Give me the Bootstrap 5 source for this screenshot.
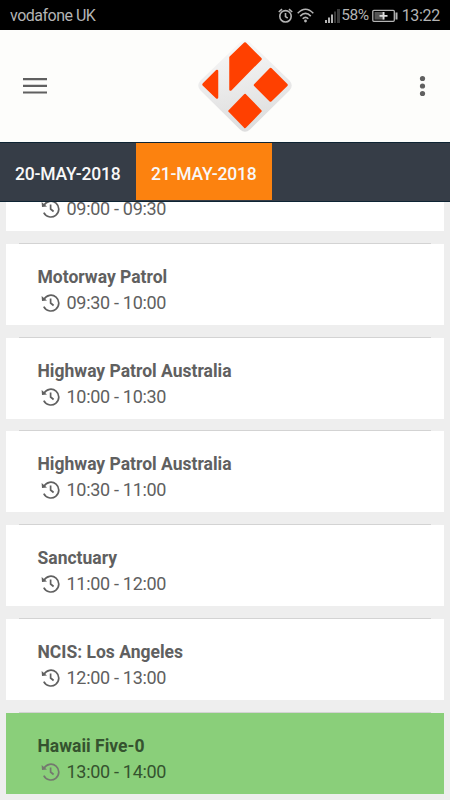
<!DOCTYPE html>
<html lang="en">
<head>
<meta charset="utf-8">
<meta name="viewport" content="width=device-width, initial-scale=1">
<title>TV Guide</title>
<link href="https://cdn.jsdelivr.net/npm/bootstrap@5.3.0/dist/css/bootstrap.min.css" rel="stylesheet">
<style>
  body { font-family: Roboto, "Liberation Sans", sans-serif; background: #eee; height: 800px; line-height: 1; }
  svg { display: block; flex: none; }
  .status { height: 30px; background: #000; color: #b4b4b4; padding: 1px 10px 0; font-size: 16px; letter-spacing: -.5px; }
  .status .batt { font-size: 15.5px; margin: 0 3px 0 1px; }
  .status .clock { letter-spacing: -.3px; }
  .signal { margin-left: 11px; }
  .appbar { height: 112px; background: #fdfdfb; padding: 0 22px 0 22px; }
  .logo { margin-left: 25px; }
  .tabs { height: 60px; background: #363d47; border-top: 1px solid #0e2433; border-bottom: 1px solid #0e2433; font-size: 17.5px; font-weight: 500; letter-spacing: -.18px; }
  .tabs .nav-link { width: 136px; height: 60px; color: #f8f8f8; padding: 3px 0 0 15px; }
  .tabs .nav-link.active { background: #fc820f; height: 57px; padding-top: 6px; }
  .guide { padding: 0 6px 6.2px; gap: 12.6px; }
  .show { height: 81.2px; flex: none; border: 0; border-radius: 0; background: #fff; padding: 0 13px; color: #606060; }
  .show::before { content: ""; height: 1px; margin-top: -1px; background: #d3d3d3; flex: none; }
  .show-body { padding: 24px 0 0 18.5px; }
  .show-title { font-size: 17.5px; font-weight: 700; line-height: 18px; margin: 0; }
  .show-time { font-size: 18px; letter-spacing: -.3px; line-height: 18px; margin-top: 8px; padding-left: 3px; gap: 7px; }
  .show-time svg { color: #606060; }
  .current { background: #8acf7a; color: #35532f; }
  .current .show-time svg { color: #74786f; }
</style>
</head>
<body class="d-flex flex-column overflow-hidden">
<svg width="0" height="0" class="position-absolute">
  <symbol id="history" viewBox="0 0 19 18">
    <path d="M3 5.200A7.900 7.900 0 1 1 2.800 12.600" fill="none" stroke="currentColor" stroke-width="1.700"/>
    <path d="M.6 2 1 6.900 6 6.400Z" fill="currentColor"/>
    <path d="M9.600 4.500V9L12.600 11.500" fill="none" stroke="currentColor" stroke-width="1.700"/>
  </symbol>
</svg>

<header class="status d-flex align-items-center flex-shrink-0">
  <span class="me-auto carrier">vodafone UK</span>
  <svg width="15" height="16" viewBox="0 0 15 16" fill="none" stroke="#b4b4b4" stroke-width="1.6"><circle cx="7.5" cy="8.3" r="5.7"/><path d="M7.5 5v3.700l2.200 1.500M.8 4 4 1.200M14.200 4 11 1.200"/></svg>
  <svg class="ms-1" width="17" height="15" viewBox="0 0 17 15" fill="none" stroke="#b4b4b4" stroke-width="1.6"><path d="M.7 5.3Q8.5-2.7 16.3 5.3M3.2 8.1Q8.5 2.7 13.8 8.1M5.7 10.8Q8.5 8 11.3 10.8"/><circle cx="8.500" cy="13" r="1.400" fill="#b4b4b4" stroke="none"/></svg>
  <svg class="signal" width="15" height="15" viewBox="0 0 15 15" fill="#b4b4b4"><path d="M0 12h2v3H0zM3 9.500h2V15H3zM6 6.500h2V15H6z"/><path d="M9 3.500h2V15H9zM12 1h3v14h-3z" fill="#3a3a3a"/></svg>
  <span class="batt">58%</span>
  <svg width="26" height="14" viewBox="0 0 26 14"><rect x=".8" y="1.300" width="21.500" height="11" rx="1" fill="none" stroke="#b4b4b4" stroke-width="1.300"/><path d="M2.500 3h10v7.600h-10z" fill="#555"/><path d="M23.500 3.500h2v7h-2z" fill="#b4b4b4"/><path d="M7.500 6.800h8M11.500 3v7.600" stroke="#ddd" stroke-width="1.800"/></svg>
  <span class="clock ms-1">13:22</span>
</header>

<nav class="appbar d-flex align-items-center justify-content-between flex-shrink-0">
  <svg width="26" height="18" viewBox="0 0 26 18" fill="#606060"><path d="M1 1h24v2.200H1zM1 7.800h24V10H1zM1 14.400h24v2.200H1z"/></svg>
  <svg class="logo" width="98" height="98" viewBox="0 0 98 98">
    <defs><linearGradient id="plate" x1="0" y1="0" x2=".2" y2="1"><stop offset="0" stop-color="#fafafa"/><stop offset="1" stop-color="#dedede"/></linearGradient></defs>
    <path d="M44 5.500Q49 .5 54 5.500L93.500 43.500Q98 48.500 93.500 53.500L54 92.500Q49 97 44 92.500L4.500 53.500Q0 48.500 4.500 43.500Z" fill="url(#plate)"/>
    <g fill="#ff4000" stroke="#ff4000" stroke-width="2.500" stroke-linejoin="round">
      <path d="M49 6.500 64.500 22 34.500 52.500V20.500Z"/>
      <path d="M21 34V60.500L7.500 47.500Z"/>
      <path d="M74.500 32 90.500 48 74.500 63.500 59 48Z"/>
      <path d="M49 58 64.500 74 49 90 33.500 74Z"/>
    </g>
  </svg>
  <svg width="11" height="22" viewBox="0 0 11 22" fill="#606060"><circle cx="5.500" cy="3.500" r="2.600"/><circle cx="5.500" cy="11" r="2.600"/><circle cx="5.500" cy="18.500" r="2.600"/></svg>
</nav>

<div class="tabs nav flex-nowrap flex-shrink-0">
  <a class="nav-link d-flex align-items-center" href="#">20-MAY-2018</a>
  <a class="nav-link active d-flex align-items-center" href="#">21-MAY-2018</a>
</div>

<main class="guide d-flex flex-column justify-content-end flex-grow-1 overflow-hidden">
  <article class="show card"><div class="show-body"><div class="show-title">&nbsp;</div><div class="show-time d-flex align-items-center"><svg width="19" height="18"><use href="#history"/></svg><span>09:00 - 09:30</span></div></div></article>
  <article class="show card"><div class="show-body"><h2 class="show-title">Motorway Patrol</h2><div class="show-time d-flex align-items-center"><svg width="19" height="18"><use href="#history"/></svg><span>09:30 - 10:00</span></div></div></article>
  <article class="show card"><div class="show-body"><h2 class="show-title">Highway Patrol Australia</h2><div class="show-time d-flex align-items-center"><svg width="19" height="18"><use href="#history"/></svg><span>10:00 - 10:30</span></div></div></article>
  <article class="show card"><div class="show-body"><h2 class="show-title">Highway Patrol Australia</h2><div class="show-time d-flex align-items-center"><svg width="19" height="18"><use href="#history"/></svg><span>10:30 - 11:00</span></div></div></article>
  <article class="show card"><div class="show-body"><h2 class="show-title">Sanctuary</h2><div class="show-time d-flex align-items-center"><svg width="19" height="18"><use href="#history"/></svg><span>11:00 - 12:00</span></div></div></article>
  <article class="show card"><div class="show-body"><h2 class="show-title">NCIS: Los Angeles</h2><div class="show-time d-flex align-items-center"><svg width="19" height="18"><use href="#history"/></svg><span>12:00 - 13:00</span></div></div></article>
  <article class="show card current"><div class="show-body"><h2 class="show-title">Hawaii Five-0</h2><div class="show-time d-flex align-items-center"><svg width="19" height="18"><use href="#history"/></svg><span>13:00 - 14:00</span></div></div></article>
</main>
<script src="https://cdn.jsdelivr.net/npm/bootstrap@5.3.0/dist/js/bootstrap.bundle.min.js"></script>
</body>
</html>
